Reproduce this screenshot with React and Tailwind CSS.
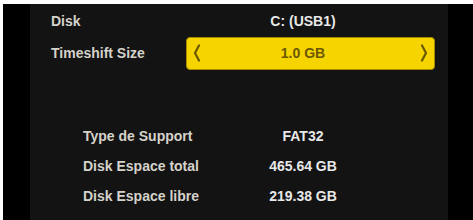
import React from 'react';

const font = { fontFamily: '"Liberation Sans", Arial, sans-serif' };

const Chevron = ({ dir }) => (
    <svg width="8" height="18" viewBox="0 0 8 18" fill="none">
        <path
            d={dir === 'left' ? 'M6 1.5 L2 9 L6 16.5' : 'M2 1.5 L6 9 L2 16.5'}
            stroke="#6b5800"
            strokeWidth="2.2"
            strokeLinecap="round"
            strokeLinejoin="round"
        />
    </svg>
);

const InfoRow = ({ label, value }) => (
    <div className="h-[30px] flex items-center pl-[53px]">
        <span className="w-[170px] text-[#d4d2ca]">{label}</span>
        <span className="w-[100px] text-center text-[#e8e8e8]">{value}</span>
    </div>
);

export default function App() {
    return (
        <div className="w-[473px] h-[220px] bg-white pt-[4px] pl-[3px] flex overflow-hidden" style={font}>
            <div className="w-[27px] bg-black"></div>

            {/* Settings panel */}
            <div className="flex-1 bg-[#131313] pt-[1px] text-[14px] font-bold">
                <div className="h-[32px] flex items-center pl-[21px]">
                    <span className="w-[135px] text-[#d4d2ca]">Disk</span>
                    <span className="w-[249px] pl-[14px] pr-[29px] text-center text-[#e8e8e8]">C: (USB1)</span>
                </div>

                <div className="h-[32px] flex items-center pl-[21px]">
                    <span className="w-[135px] text-[#d4d2ca]">Timeshift Size</span>
                    <div className="w-[249px] h-[33px] flex items-center px-[6px] rounded-[4px] bg-[#f6d400] border border-[#a88c00]">
                        <Chevron dir="left" />
                        <span className="flex-1 pr-[15px] text-center text-[#6b5800]">1.0 GB</span>
                        <Chevron dir="right" />
                    </div>
                </div>

                <div className="mt-[52px]">
                    <InfoRow label="Type de Support" value="FAT32" />
                    <InfoRow label="Disk Espace total" value="465.64 GB" />
                    <InfoRow label="Disk Espace libre" value="219.38 GB" />
                </div>
            </div>

            <div className="w-[25px] bg-black"></div>
        </div>
    );
}
